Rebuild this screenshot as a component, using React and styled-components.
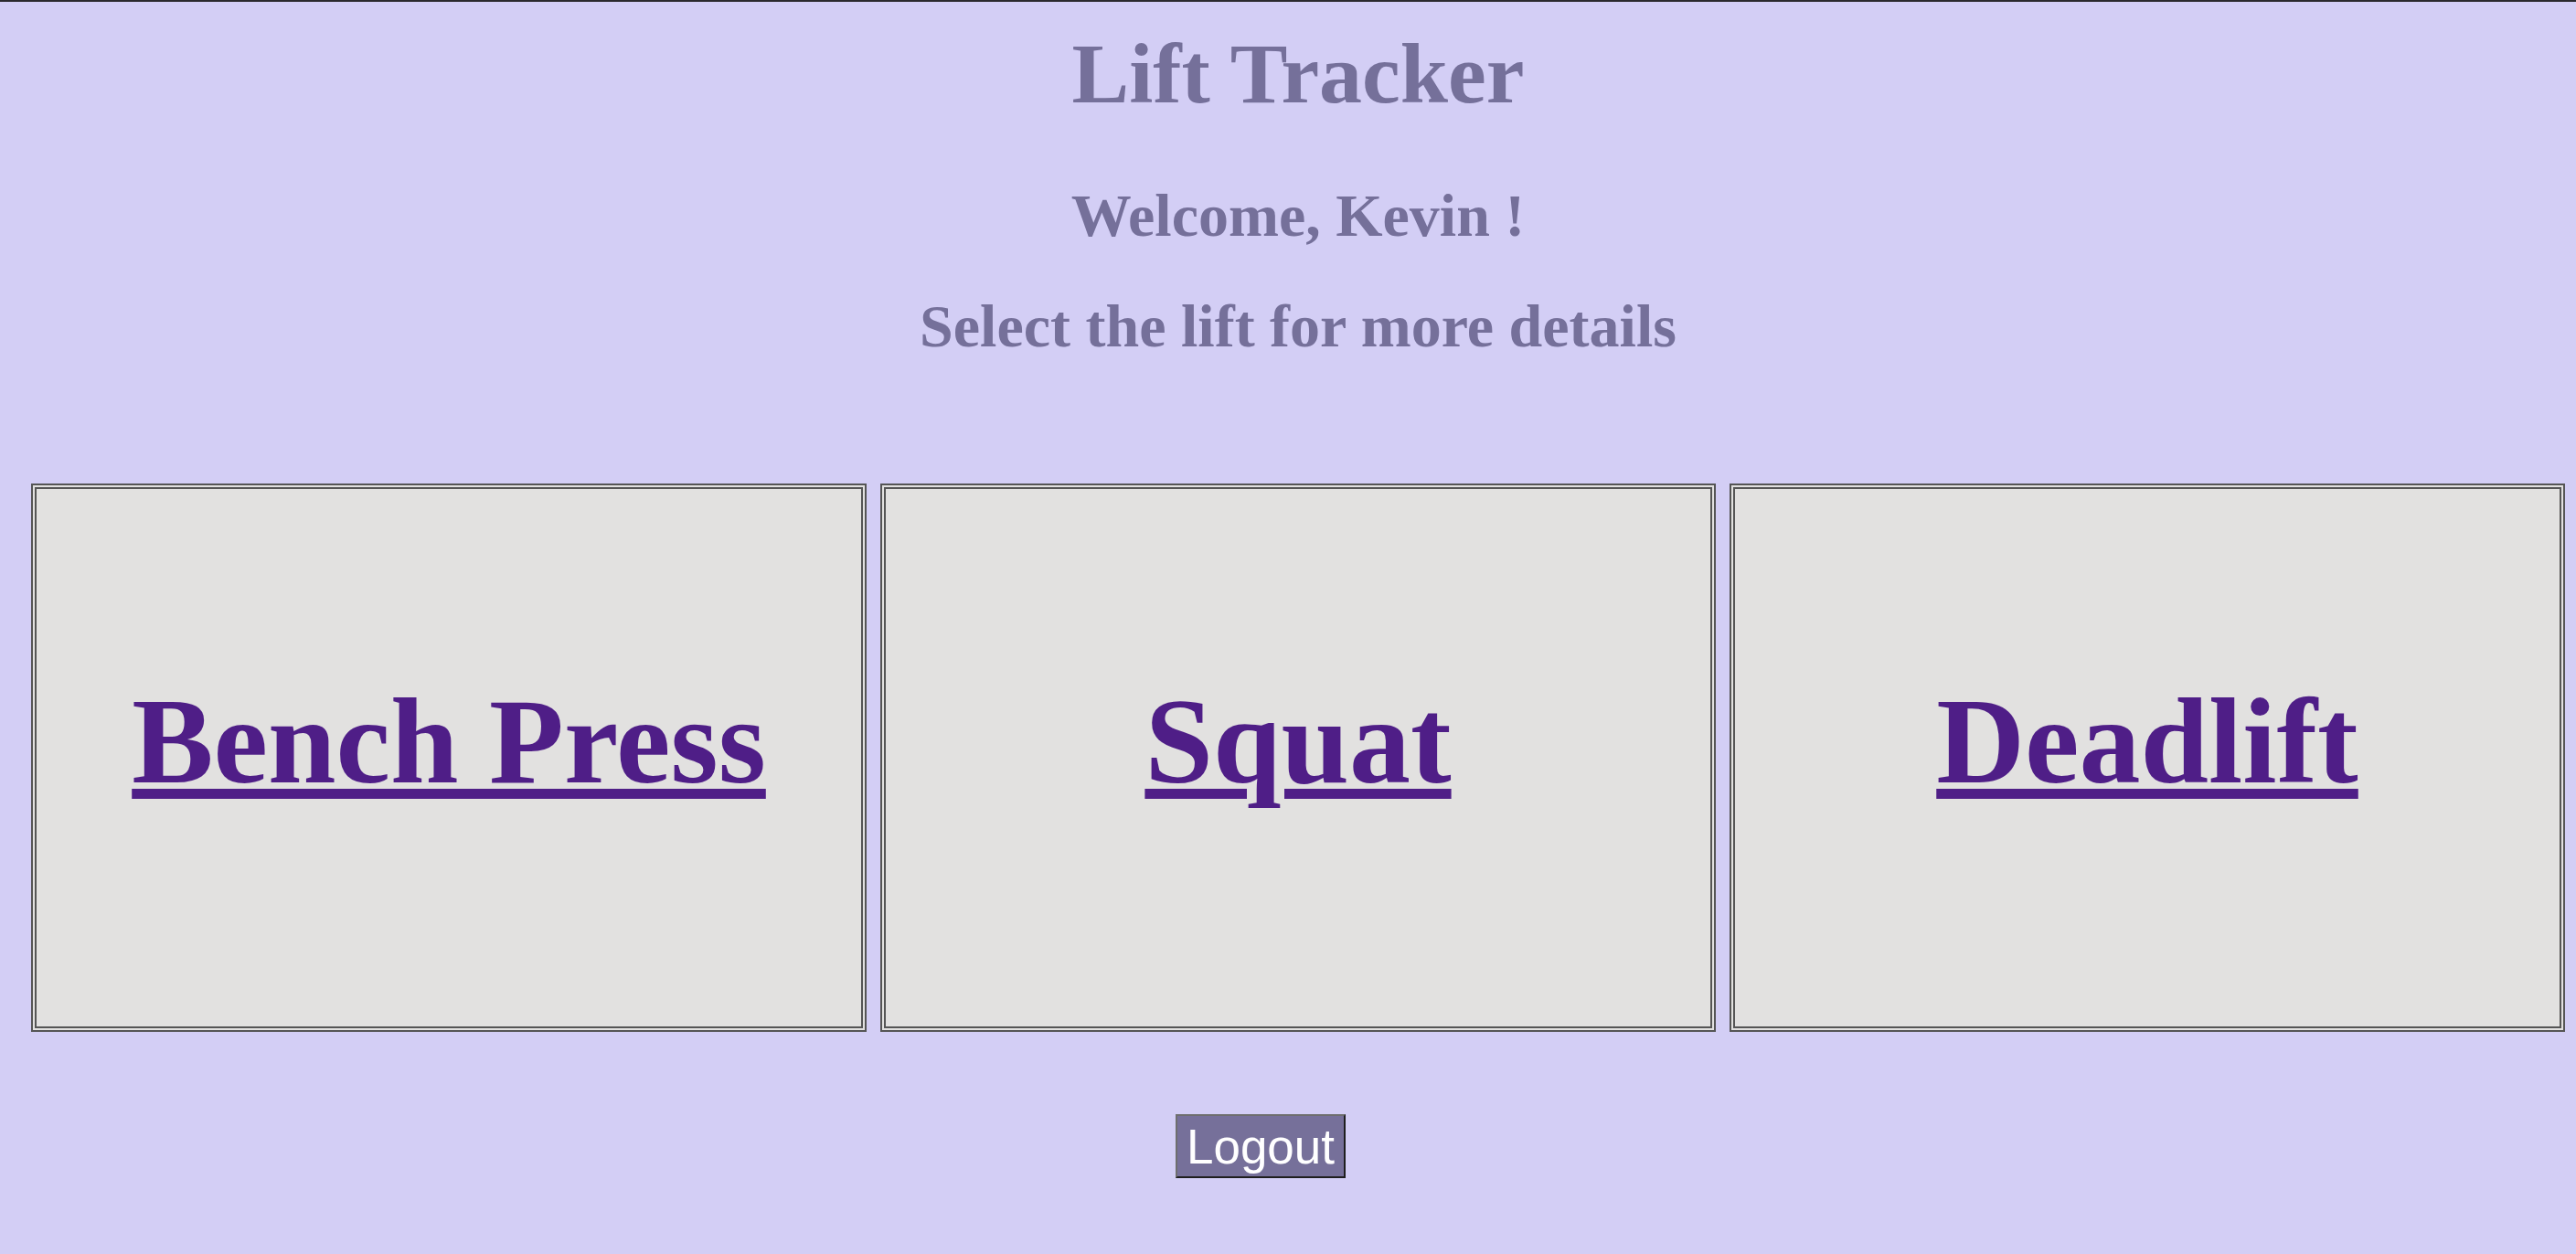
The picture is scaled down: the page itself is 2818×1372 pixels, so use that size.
import React from "react";
import styled, { createGlobalStyle } from "styled-components";

const GlobalStyle = createGlobalStyle`
  html, body {
    margin: 0;
    padding: 0;
    background: #d3cef5;
  }
  body {
    font-family: "Liberation Serif", "Times New Roman", serif;
  }
`;

const Page = styled.div`
  min-height: 1370px;
  border-top: 2px solid #2b2a2e;
  background: #d3cef5;
  padding: 0 12px 0 34px;
  display: flex;
  flex-direction: column;
  align-items: stretch;
`;

const Title = styled.h1`
  margin: 26px 0 0;
  font-family: "Liberation Serif", "Times New Roman", serif;
  font-weight: bold;
  font-size: 94px;
  line-height: 104px;
  color: #75709a;
  text-align: center;
`;

const Subtitle = styled.h2`
  margin: ${(p) => p.$top}px 0 0;
  font-family: "Liberation Serif", "Times New Roman", serif;
  font-weight: bold;
  font-size: 66px;
  line-height: 73px;
  color: #75709a;
  text-align: center;
`;

const CardRow = styled.div`
  margin-top: 136px;
  display: grid;
  grid-template-columns: repeat(3, 1fr);
  gap: 15px;
`;

const Card = styled.div`
  box-sizing: border-box;
  height: 600px;
  border: 6px double #555555;
  background: #e2e1e0;
  display: flex;
  align-items: center;
  justify-content: center;
  padding-bottom: 36px;
`;

const LiftLink = styled.a`
  font-family: "Liberation Serif", "Times New Roman", serif;
  font-weight: bold;
  font-size: 134px;
  line-height: 148px;
  color: #4f1e87;
  text-decoration: underline;
  text-decoration-thickness: 11px;
  text-underline-offset: 7px;
  cursor: pointer;
`;

const Footer = styled.div`
  margin-top: 90px;
  display: flex;
  justify-content: center;
  padding-right: 82px;
`;

const LogoutButton = styled.button`
  box-sizing: border-box;
  height: 70px;
  padding: 0 10px;
  background: #76709a;
  color: #ffffff;
  font-family: "Liberation Sans", Arial, sans-serif;
  font-size: 53px;
  line-height: 1;
  border-style: solid;
  border-width: 2px;
  border-color: #6e6e6e #1e1e1e #1e1e1e #6e6e6e;
  cursor: pointer;
`;

const lifts = ["Bench Press", "Squat", "Deadlift"];

export default function App() {
  return (
    <>
      <GlobalStyle />
      <Page>
        <Title>Lift Tracker</Title>
        <Subtitle $top={67}>Welcome, Kevin !</Subtitle>
        <Subtitle $top={48}>Select the lift for more details</Subtitle>
        <CardRow>
          {lifts.map((lift) => (
            <Card key={lift}>
              <LiftLink href="#">{lift}</LiftLink>
            </Card>
          ))}
        </CardRow>
        <Footer>
          <LogoutButton>Logout</LogoutButton>
        </Footer>
      </Page>
    </>
  );
}
